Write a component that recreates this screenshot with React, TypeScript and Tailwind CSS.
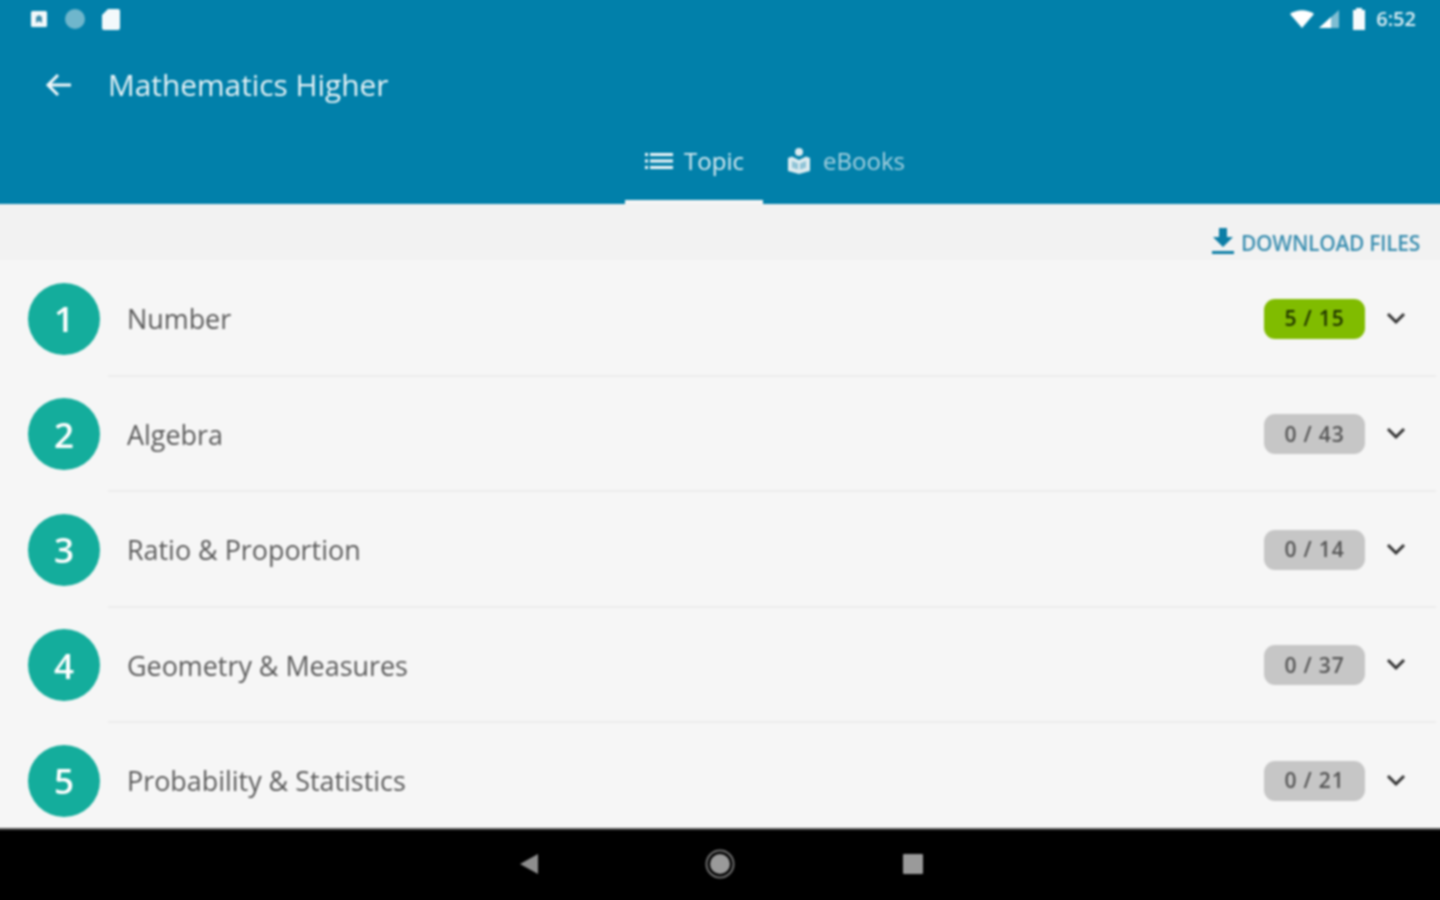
import React from "react";

const rows = [
  { n: 1, t: "Number", b: "5 / 15", on: true },
  { n: 2, t: "Algebra", b: "0 / 43" },
  { n: 3, t: "Ratio & Proportion", b: "0 / 14" },
  { n: 4, t: "Geometry & Measures", b: "0 / 37" },
  { n: 5, t: "Probability & Statistics", b: "0 / 21" },
];

export default function App() {
  return (
    <div className="w-[1440px] h-[900px] overflow-hidden">
      <div className="w-[1448px] h-[908px] -ml-[4px] -mt-[4px] flex flex-col bg-[#f6f6f6] font-['Open_Sans',sans-serif] blur-[0.85px]">
        <header className="h-[208px] shrink-0 bg-[#0180aa] flex flex-col text-white">
          <div className="h-[42px] pt-[4px] flex items-center justify-between pl-[34px] pr-[28px]">
            <div className="flex items-center gap-[16px]">
              <svg width="18" height="18" viewBox="0 0 18 18"><rect x="1" y="1" width="16" height="16" rx="1.5" fill="#f2f8fa" /><path d="M6 13V7l3-2 3 2v6l-3-2z" fill="#3f8fae" /></svg>
              <svg width="22" height="22" viewBox="0 0 22 22"><circle cx="11" cy="11" r="10" fill="#6fb6cc" /></svg>
              <svg width="20" height="24" viewBox="0 0 20 24" className="-ml-[1px]"><path d="M7 2h10a2 2 0 0 1 2 2v17a2 2 0 0 1-2 2H3a2 2 0 0 1-2-2V8z" fill="#f3f9fb" /></svg>
            </div>
            <div className="flex items-center">
              <svg width="26" height="20" viewBox="0 0 26 20"><path d="M1 5c7-5 17-5 24 0L13 19z" fill="#fff" /></svg>
              <svg width="24" height="20" viewBox="0 0 24 20" className="ml-[2px]"><path d="M2 19L22 1v18z" fill="#7fbdd2" /><path d="M2 19L14 8v11z" fill="#fff" /></svg>
              <svg width="16" height="24" viewBox="0 0 16 24" className="ml-[10px]"><path d="M5 1h6v2h3v20H2V3h3z" fill="#f5fafc" /></svg>
              <span className="ml-[9px] text-[20px] leading-none font-semibold text-[#dcedf3]">6:52</span>
            </div>
          </div>
          <div className="h-[94px] flex items-center pl-[48px] pb-[1px]">
            <svg width="30" height="30" viewBox="0 0 30 30" fill="none" stroke="#f0f7fa" strokeWidth="3"><path d="M27 15H4M14 5L4 15l10 10" /></svg>
            <h1 className="ml-[34px] text-[29.800px] leading-none text-[#e8f3f7] font-normal">Mathematics Higher</h1>
          </div>
          <nav className="flex-1 flex justify-center pl-[114px]">
            <div className="w-[138px] flex items-center justify-center gap-[10px] border-b-[4px] border-[#f5f5f5] pb-[11px]">
              <svg width="30" height="20" viewBox="0 0 30 20" fill="#eef6f9"><path d="M1 2h3v3H1zM1 8.500h3v3H1zM1 15h3v3H1zM6 2h23v3H6zM6 8.500h23v3H6zM6 15h23v3H6z" /></svg>
              <span className="text-[24px] leading-none text-[#dcecf2]">Topic</span>
            </div>
            <div className="w-[166px] flex items-center justify-center gap-[12px] pb-[15px]">
              <svg width="24" height="28" viewBox="0 0 24 28" fill="#dcebf0"><circle cx="12" cy="5" r="4" /><path d="M1 11l4-1.500 7 3.500 7-3.500 4 1.500v13l-11 3-11-3z" /><path d="M5 14l6 2.500v6L5 20.500zM19 14l-6 2.500v6l6-2z" fill="#8fc3d6" /></svg>
              <span className="text-[24px] leading-none text-[#a9d2e0]">eBooks</span>
            </div>
          </nav>
        </header>
        <div className="h-[56px] shrink-0 bg-[#f2f2f2] flex items-center justify-end pr-[24px] pt-[30px] pb-[8px]">
          <svg width="24" height="28" viewBox="0 0 24 28" fill="#0d7ea6" className="mb-[5px]"><path d="M8 1h8v9h6L12 20 2 10h6zM1 24h22v3H1z" /></svg>
          <span className="ml-[6px] text-[21px] leading-none font-semibold text-[#3a8eb0] tracking-[-0.3px]">DOWNLOAD FILES</span>
        </div>
        <main className="flex-1 overflow-hidden pt-[1px]">
          {rows.map((r) => (
            <div key={r.n} className="h-[115.500px] flex items-center pl-[32px] relative">
              <div className="w-[72px] h-[72px] rounded-full bg-[#14ad9c] flex items-center justify-center text-white text-[35px] leading-none font-semibold shrink-0">{r.n}</div>
              <span className="ml-[27px] flex-1 text-[26.900px] leading-none text-[#5a5a5a] pt-[2px]">{r.t}</span>
              <div className={`w-[101px] h-[40px] rounded-[11px] flex items-center justify-center text-[21px] leading-none font-semibold tracking-[0.8px] ${r.on ? "bg-[#80bc00] text-[#1f3300]" : "bg-[#c6c6c6] text-[#555555]"}`}>{r.b}</div>
              <svg width="22" height="14" viewBox="0 0 22 14" fill="none" stroke="#333333" strokeWidth="3" className="ml-[20px] mr-[37px] mb-[2px]"><path d="M3 3l8 8 8-8" /></svg>
              {r.n < 5 && <div className="absolute left-[112px] right-[8px] bottom-0 h-[2px] bg-[#ececec]" />}
            </div>
          ))}
        </main>
        <footer className="h-[76px] shrink-0 bg-black border-t-[2px] border-[#555555] flex items-center justify-center pl-[2px] pb-[6px]">
          <svg width="20" height="22" viewBox="0 0 20 22"><path d="M19 1v20L1 11z" fill="#8e8e8e" /></svg>
          <svg width="30" height="30" viewBox="0 0 30 30" className="ml-[166px]"><circle cx="15" cy="15" r="13.500" fill="none" stroke="#707070" strokeWidth="2" /><circle cx="15" cy="15" r="10" fill="#9a9a9a" /></svg>
          <div className="ml-[168px] w-[20px] h-[20px] bg-[#9a9a9a] rounded-[1px]" />
        </footer>
      </div>
    </div>
  );
}
